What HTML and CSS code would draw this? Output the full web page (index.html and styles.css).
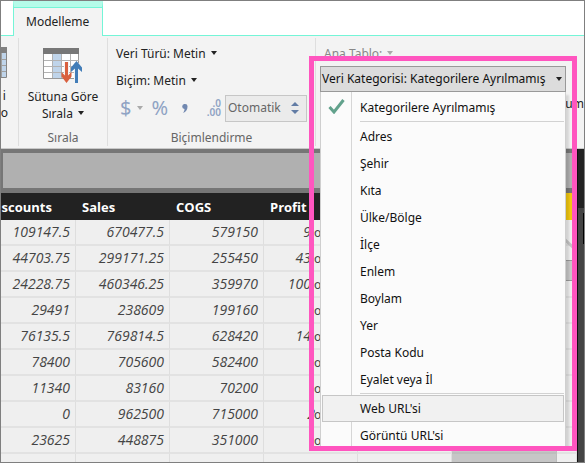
FILE: index.html
```html
<!DOCTYPE html>
<html lang="tr">
<head>
<meta charset="utf-8">
<title>Modelleme</title>
<link rel="stylesheet" href="styles.css">
</head>
<body>
<div class="app">
  <nav class="tabs"><button class="tab">Modelleme</button></nav>

  <section class="ribbon">
    <div class="group group-clipped">
      <svg class="table-icon" width="38" height="34" viewBox="0 0 38 34" aria-hidden="true">
        <path fill="#fff" stroke="#858585" d="M.5 1.5h36v29H.5z"/>
        <path fill="#808080" d="M0 0h37v6H0z"/>
        <path fill="#bfd4ea" d="M24 6h12v24H24z"/>
        <path stroke="#a0a0a0" d="M1 12.5h35M1 18.5h35M1 24.5h35M31.500 6v24"/>
      </svg>
      <div class="big-label">i<br>o</div>
    </div>
    <div class="group group-sort">
      <button class="big-button">
        <svg width="39" height="35" viewBox="0 0 39 35" aria-hidden="true">
          <path fill="#fff" stroke="#999" d="M.5.5h35v30H.5z"/>
          <path fill="#bfd4ea" d="M10 6h8v24h-8z"/>
          <path fill="none" stroke="#b2b2b2" d="M1 12.5h35M1 18.5h35M1 24.5h35M9.500 6v24M18.500 6v24M27.500 6v24"/>
          <path fill="#777" d="M0 0h36v6H0z"/>
          <path fill="none" stroke="#f3f3f3" stroke-width="5" d="M23.500 14v20M33.500 15v20"/>
          <path fill="#d9603f" d="M22 14h3v13.500l3.500-3.500v4.500L23.500 35l-5-6.500V24l3.500 3.500z"/>
          <path fill="#427db8" d="M32 35h3V20.500l4 3.500v-4.500L33.500 13 28 19.500V24l4-3.500z"/>
        </svg>
        <span class="big-label">Sütuna Göre<br>Sırala <i class="caret"></i></span>
      </button>
      <div class="group-name">Sırala</div>
    </div>
    <div class="group group-format">
      <button class="line-button">Veri Türü: Metin <i class="caret"></i></button>
      <button class="line-button">Biçim: Metin <i class="caret"></i></button>
      <div class="format-row">
        <button class="symbol" disabled>$</button>
        <i class="caret caret-dim"></i>
        <button class="symbol symbol-percent" disabled>%</button>
        <button class="symbol symbol-comma" disabled aria-label="Binlik ayırıcı">
          <svg width="6" height="9" viewBox="0 0 6 9"><path fill="#7188b0" d="M3 0a2.500 2.500 0 0 1 2.500 2.800C5.500 5.500 4 8 1 9c1-1.500 1.500-2.500 1.500-4A2.500 2.500 0 1 1 3 0z"/></svg>
        </button>
        <span class="decimals">.0<br>.00</span>
        <label class="spin"><input type="text" value="Otomatik" disabled aria-label="Ondalık basamaklar">
          <svg width="8" height="12" viewBox="0 0 8 12" aria-hidden="true"><path fill="#627ca5" d="M0 4l4-4 4 4zM0 8h8l-4 4z"/></svg>
        </label>
      </div>
      <div class="group-name">Biçimlendirme</div>
    </div>
    <div class="group group-more">
      <button class="line-button dim" disabled>Ana Tablo: <i class="caret caret-dim"></i></button>
      <div class="clipped-text">um</div>
    </div>
  </section>

  <main class="work">
    <div class="canvas">
      <div class="formula"><div class="formula-bar"></div></div>
      <table class="data">
        <colgroup><col class="c"><col class="c"><col class="c"><col class="c"><col class="c"><col class="wide"><col></colgroup>
        <thead><tr><th>Discounts</th><th>Sales</th><th>COGS</th><th>Profit</th><th></th><th></th><th class="picked"></th></tr></thead>
        <tbody>
          <tr><td>109147.5</td><td>670477.5</td><td>579150</td><td class="cut">9</td><td></td><td></td><td></td></tr>
          <tr><td>44703.75</td><td>299171.25</td><td>255450</td><td class="cut">43</td><td></td><td></td><td></td></tr>
          <tr><td>24228.75</td><td>460346.25</td><td>359970</td><td class="cut">100</td><td></td><td></td><td></td></tr>
          <tr><td>29491</td><td>238609</td><td>199160</td><td class="cut"></td><td></td><td></td><td></td></tr>
          <tr><td>76135.5</td><td>769814.5</td><td>628420</td><td class="cut">14</td><td></td><td></td><td></td></tr>
          <tr><td>78400</td><td>705600</td><td>582400</td><td class="cut whole">1</td><td></td><td></td><td></td></tr>
          <tr><td>11340</td><td>83160</td><td>70200</td><td class="cut"></td><td></td><td></td><td></td></tr>
          <tr><td>0</td><td>962500</td><td>715000</td><td class="cut whole">2</td><td></td><td></td><td></td></tr>
          <tr><td>23625</td><td>448875</td><td>351000</td><td class="cut"></td><td></td><td class="shade"></td><td></td></tr>
          <tr><td></td><td></td><td></td><td></td><td></td><td class="shade"></td><td></td></tr>
        </tbody>
      </table>
      <svg class="peek" width="14" height="44" viewBox="0 0 14 44" aria-hidden="true"><path fill="none" stroke="#c4c4c4" stroke-width="3" d="M0 0l13 12"/><path fill="#c8c8c8" stroke="#999" d="M0 22.500h14v20H0z"/></svg>
    </div>
    <aside class="side"><div class="side-top"></div><div class="side-mark"></div></aside>
  </main>

  <div class="callout">
    <div class="under"><span>oc</span><span>oc</span><span>oc</span><span>oc</span><span>oc</span><span>oc</span><span>oc</span><span>oc</span><span>oc</span></div>
    <button class="category" aria-haspopup="menu" aria-expanded="true"><span>Veri Kategorisi: Kategorilere Ayrılmamış</span><i class="caret"></i></button>
    <div class="menu" role="menu">
      <button role="menuitem"><svg class="check" width="17" height="15" viewBox="0 0 17 15" aria-hidden="true"><path fill="none" stroke="#62a28c" stroke-width="3" d="M1.500 8l4.500 5L15.500 1"/></svg>Kategorilere Ayrılmamış</button>
      <hr>
      <button role="menuitem">Adres</button>
      <button role="menuitem">Şehir</button>
      <button role="menuitem">Kıta</button>
      <button role="menuitem">Ülke/Bölge</button>
      <button role="menuitem">İlçe</button>
      <button role="menuitem">Enlem</button>
      <button role="menuitem">Boylam</button>
      <button role="menuitem">Yer</button>
      <button role="menuitem">Posta Kodu</button>
      <button role="menuitem">Eyalet veya İl</button>
      <hr>
      <button role="menuitem" class="hover">Web URL'si</button>
      <button role="menuitem">Görüntü URL'si</button>
    </div>
  </div>
</div>
</body>
</html>
```
FILE: styles.css
```css
* { box-sizing: border-box; }
body { margin: 0; font: 12px/16px "Noto Sans", sans-serif; color: #222; }
button { font: inherit; color: inherit; background: none; border: 0; padding: 0; margin: 0; white-space: nowrap; }
svg { display: block; }
.app { position: relative; display: flex; flex-direction: column; height: 100vh; border: 1px solid #7f7f7f; overflow: hidden; background: #fff; }

.tabs { flex: none; display: flex; height: 35px; padding-left: 12px; border-bottom: 1px solid #74f5d7; }
.tab { height: 35px; padding: 0 13px 0 12px; border: 1px solid #74f5d7; border-top: 6px solid #b5fbe9; border-bottom: 0; background: #f3f3f3; box-shadow: inset 0 1px #74f5d7; }

.ribbon { flex: none; display: flex; height: 113px; padding: 2px 0; background: #f3f3f3; border-bottom: 1px solid #c8c8c8; }
.group { position: relative; flex: none; border-right: 1px solid #dedede; }
.group-clipped { width: 18px; overflow: hidden; padding: 9px 10px 0 0; display: flex; flex-direction: column; align-items: flex-end; gap: 6px; text-align: center; }
.group-sort, .group-format { display: flex; flex-direction: column; }
.group-sort { width: 89px; align-items: center; padding-top: 10px; }
.group-format { width: 208px; padding: 8px 8px 0; align-items: flex-start; }
.group-more { flex: 1; border: 0; padding: 8px 0 0 8px; overflow: hidden; }
.big-button { display: flex; flex-direction: column; align-items: center; gap: 5px; }
.big-label { line-height: 17px; }
.group-name { margin-top: auto; align-self: center; color: #666; }
.line-button { display: block; height: 16px; margin-bottom: 11px; }
.dim { color: #888; }
.caret { display: inline-block; border: 3px solid transparent; border-top: 4px solid #222; border-bottom: 0; vertical-align: 3px; margin-left: 2px; }
.caret-dim { border-top-color: #aaa; }
.format-row { display: flex; align-self: stretch; align-items: center; height: 26px; margin-top: -5px; color: #8fa3c4; }
.format-row .caret { margin-left: 6px; }
.symbol { font-size: 20px; color: #8fa3c4; line-height: 26px; padding-left: 4px; }
.symbol-percent { padding-left: 8px; }
.symbol-comma { padding-left: 14px; }
.decimals { margin-left: auto; font-size: 10px; line-height: 9px; text-align: right; font-weight: 600; padding-right: 4px; }
.spin { display: flex; align-items: center; width: 82px; height: 27px; padding: 0 7px 0 2px; border: 1px solid #c6c6c6; background: #ebebeb; }
.spin input { flex: 1; min-width: 0; padding: 0; border: 0; background: none; font: inherit; color: #666; }
.clipped-text { display: flex; justify-content: flex-end; margin-top: 34px; }

.work { flex: 1; display: flex; min-height: 0; }
.canvas { position: relative; flex: 1; min-width: 0; overflow: hidden; background: #efefef; }
.formula { height: 44px; padding: 4px 0 5px 2px; background: #767676; }
.formula-bar { height: 35px; background: #b0b0b0; }
.data { width: calc(100% + 19px); margin-left: -19px; table-layout: fixed; border-collapse: separate; border-spacing: 0; }
.c { width: 94px; }
.wide { width: 105px; }
.data th, .data td { font-family: "Open Sans", "Noto Sans", sans-serif; padding: 0 5px 0 6px; white-space: nowrap; overflow: hidden; }
.data th { height: 27px; font-size: 13px; background: #222; color: #fff; text-align: left; font-weight: 700; }
.data th.picked { background: #f2c811; }
.data td { height: 26px; font-size: 14px; border-right: 1px solid #dedede; border-bottom: 2px solid #e2e2e2; text-align: right; font-style: italic; color: #444; }
.data td.cut { padding-right: 46px; }
.data td.whole { padding-right: 42px; }
.data td.shade { background: #c6c6c6; border-color: #bdbdbd; }
.peek { position: absolute; top: 89px; right: 0; }
.side { flex: none; width: 7px; background: #444; border-left: 1px solid #111; }
.side-top { height: 59px; background: #222; }
.side-mark { width: 1px; height: 31px; margin: 5px 0 0 auto; background: #000; }

.callout { position: absolute; top: 55px; left: 308px; right: 7px; height: 395px; display: flex; flex-direction: column; padding: 5px 6px 0; border: 5px solid #ff55bf; overflow: hidden; }
.under { position: absolute; top: 159px; left: 0; width: 6px; display: flex; flex-direction: column; overflow: hidden; }
.under span { height: 26px; line-height: 26px; color: #444; }
.category { flex: none; display: flex; align-items: center; justify-content: space-between; height: 26px; padding: 0 3px 0 1px; border: 1px solid #999; background: #dcdcdc; color: #111; }
.menu { position: relative; flex: none; padding: 2px 1px; border: solid #cfcfcf; border-width: 0 1px; background: linear-gradient(90deg, transparent 30px, #d6d6d6 30px, #d6d6d6 31px, transparent 31px) #fbfbfb; box-shadow: 3px 3px 2px rgba(0, 0, 0, .12); }
.menu button { position: relative; display: flex; align-items: center; width: 100%; height: 27px; padding-left: 38px; color: #111; }
.menu hr { height: 1px; margin: 0 0 1px 38px; border: 0; background: #d2d2d2; }
.menu .hover { border: 1px solid #c6c6c6; background: #f1f1f1; padding-left: 37px; }
.check { position: absolute; left: 6px; top: 5px; }
```
